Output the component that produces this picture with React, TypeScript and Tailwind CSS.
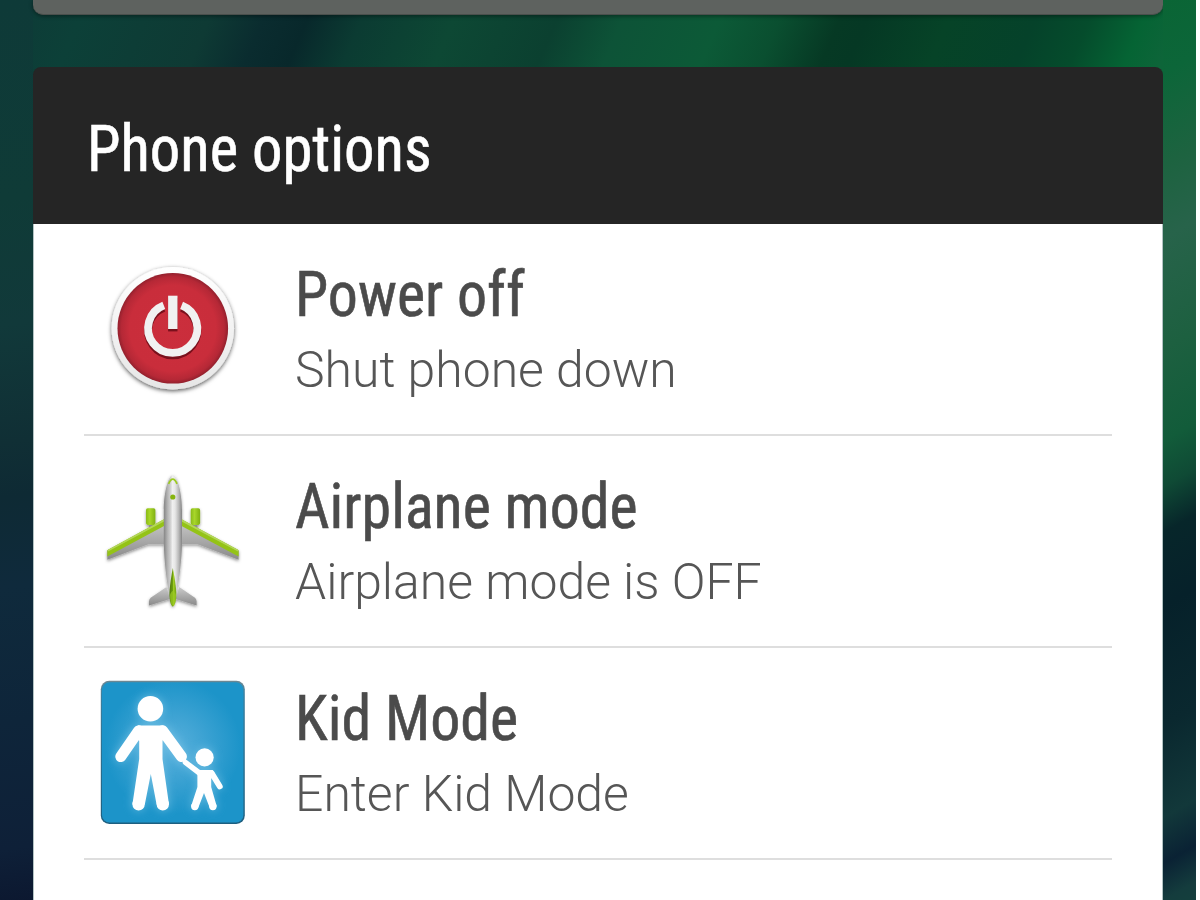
import type { ReactNode } from 'react';

interface Option {
  title: string;
  subtitle: string;
  icon: ReactNode;
}

function PowerIcon() {
  return (
    <svg viewBox="0 0 146 146" className="h-[146px] w-[146px] overflow-visible">
      <defs>
        <linearGradient id="rim" x1="0" y1="0" x2="0" y2="1">
          <stop offset="0" stopColor="#ffffff" />
          <stop offset="1" stopColor="#e6e6e6" />
        </linearGradient>
        <radialGradient id="red" cx="0.5" cy="0.5" r="0.5">
          <stop offset="0" stopColor="#cb2e3c" />
          <stop offset="0.78" stopColor="#c92d3b" />
          <stop offset="0.93" stopColor="#b52836" />
          <stop offset="1" stopColor="#93202d" />
        </radialGradient>
        <filter id="rimShadow" x="-20%" y="-20%" width="140%" height="140%">
          <feDropShadow dx="0" dy="1.6" stdDeviation="2.2" floodColor="#000" floodOpacity="0.65" />
        </filter>
      </defs>
      <circle cx="72.8" cy="71.3" r="61.2" fill="url(#rim)" filter="url(#rimShadow)" />
      <circle cx="72.8" cy="71.3" r="55.3" fill="url(#red)" />
      <g fill="none" stroke="#7a101c" strokeWidth="7.8" transform="translate(0 2.4)">
        <path d="M81.6 48.4A24.6 24.6 0 1 1 63.8 48.4" />
        <path d="M72.8 38.7V72" strokeWidth="9.4" />
      </g>
      <g fill="none" stroke="#f1f1f1" strokeWidth="7.8">
        <path d="M81.6 48.4A24.6 24.6 0 1 1 63.8 48.4" />
        <path d="M72.8 38.7V72" strokeWidth="9.4" />
      </g>
    </svg>
  );
}

function AirplaneIcon() {
  return (
    <svg viewBox="0 0 146 146" className="h-[146px] w-[146px] overflow-visible">
      <defs>
        <linearGradient id="body" x1="0" y1="0" x2="1" y2="0">
          <stop offset="0" stopColor="#858585" />
          <stop offset="0.2" stopColor="#b2b2b2" />
          <stop offset="0.36" stopColor="#cfcfcf" />
          <stop offset="0.48" stopColor="#f0f0f0" />
          <stop offset="0.62" stopColor="#e6e6e6" />
          <stop offset="0.8" stopColor="#bdbdbd" />
          <stop offset="1" stopColor="#858585" />
        </linearGradient>
        <linearGradient id="wing" x1="0" y1="0" x2="0" y2="1">
          <stop offset="0" stopColor="#cbcbcb" />
          <stop offset="1" stopColor="#8a8a8a" />
        </linearGradient>
        <linearGradient id="engine" x1="0" y1="0" x2="1" y2="0">
          <stop offset="0" stopColor="#8aba18" />
          <stop offset="0.4" stopColor="#a8d62a" />
          <stop offset="1" stopColor="#80b012" />
        </linearGradient>
        <linearGradient id="fin" x1="0" y1="0" x2="1" y2="0">
          <stop offset="0" stopColor="#4f780a" />
          <stop offset="0.45" stopColor="#6c9c10" />
          <stop offset="0.55" stopColor="#a2cf24" />
          <stop offset="1" stopColor="#6f9f10" />
        </linearGradient>
        <filter id="planeShadow" x="-20%" y="-20%" width="140%" height="140%">
          <feDropShadow dx="0" dy="1.5" stdDeviation="1.5" floodColor="#000" floodOpacity="0.42" />
        </filter>
      </defs>
      <g filter="url(#planeShadow)">
        <rect x="49" y="54" width="5.5" height="8" fill="#8d8d8d" />
        <rect x="92" y="54" width="5.5" height="8" fill="#8d8d8d" />
        <rect x="46" y="39.3" width="9.4" height="16.6" rx="1.8" fill="url(#engine)" />
        <rect x="90.7" y="39.3" width="9.4" height="16.6" rx="1.8" fill="url(#engine)" />
        <path d="M65 50.3L7.3 81.6V90.7L48.3 75.3H65Z" fill="url(#wing)" />
        <path d="M80.6 50.3L138.6 81.6V90.7L97.6 75.3H80.6Z" fill="url(#wing)" />
        <path d="M64 50.2L8 80.8Q7.3 81.3 7.3 82V87.6L64 57Z" fill="#94c316" />
        <path d="M81.6 50.2L138 80.8Q138.6 81.3 138.6 82V87.6L81.6 57Z" fill="#94c316" />
        <path d="M64 50.2L8 80.8V82.6L64 52.4ZM81.6 50.2L138 80.8V82.6L81.6 52.4Z" fill="#b3d65a" />
        <path d="M66.5 118L51 128.4Q49.2 129.7 49 132V136.4L70 130Z" fill="url(#wing)" />
        <path d="M79.2 118L94.6 128.4Q96.4 129.7 96.6 132V136.4L75.6 130Z" fill="url(#wing)" />
        <path
          d="M72.8 6C68.6 6.5 63.8 22 63.8 42V74C64.2 92 66.4 110 68.6 122C70 131 71.2 137 72.8 137C74.4 137 75.6 131 77 122C79.2 110 81.6 92 82 74V42C82 22 77 6.5 72.8 6Z"
          fill="url(#body)"
        />
      </g>
      <path d="M68.6 14.8Q72.8 5.6 77 14.8" fill="none" stroke="#9bca20" strokeWidth="1.8" />
      <circle cx="72.8" cy="28" r="2.6" fill="#86b40e" />
      <path d="M72.8 99C71.4 106 69.4 119 69.4 126C69.6 132 71.2 137.4 72.8 137.4C74.6 137.4 76.2 132 76.4 126C76.4 119 74.2 106 72.8 99Z" fill="url(#fin)" />
      <path d="M70 126Q72.8 118 76 126Q75.6 136.6 72.8 136.8Q70.4 136.6 70 126Z" fill="#98c822" opacity="0.75" />
    </svg>
  );
}

function KidFigures() {
  return (
    <g fill="currentColor" stroke="currentColor" strokeLinecap="round" strokeLinejoin="round">
      <circle cx="50.4" cy="27.8" r="12.8" stroke="none" />
      <path d="M38.6 49.8L20.8 75.6M62.6 49.8L81.4 75.6" strokeWidth="11" />
      <path d="M38 44.6H63L66 50L62.5 60V78L69 123.6H56.6L50.8 93L44.8 123.6H32.4L39.2 78V60L35 50Z" stroke="none" />
      <path d="M38.6 123.2V123.3M62.8 123.2V123.3" strokeWidth="12.4" />
      <circle cx="104.6" cy="76.4" r="9.1" stroke="none" />
      <path d="M85.4 81.4L99.4 92" strokeWidth="5.4" />
      <path d="M111.6 92L119.8 105.4" strokeWidth="5.8" />
      <path d="M97 89H112.6L114.6 92L111.2 98V106L116.8 125.4L109.6 126.4L104 112L98.4 126.4L91 125.4L97.4 106V94Z" stroke="none" />
      <path d="M94.8 125.4V125.5M112.9 125.4V125.5" strokeWidth="7.4" />
    </g>
  );
}

function KidModeIcon() {
  return (
    <svg viewBox="0 0 146 146" className="h-[146px] w-[146px] overflow-visible">
      <defs>
        <radialGradient id="sky" cx="0.5" cy="0.46" r="0.48">
          <stop offset="0" stopColor="#58b0dc" />
          <stop offset="0.45" stopColor="#3ea3d3" />
          <stop offset="1" stopColor="#1c94c9" />
        </radialGradient>
        <linearGradient id="edge" x1="0" y1="0" x2="0" y2="1">
          <stop offset="0" stopColor="#6d8893" />
          <stop offset="0.1" stopColor="#3b7f9f" />
          <stop offset="1" stopColor="#1d5f80" />
        </linearGradient>
        <filter id="glow" x="-30%" y="-30%" width="160%" height="160%">
          <feGaussianBlur stdDeviation="5" />
        </filter>
      </defs>
      <rect x="0.8" y="-0.3" width="144" height="143.2" rx="8.5" fill="url(#edge)" />
      <rect x="2" y="1.2" width="141.4" height="140.2" rx="7.5" fill="url(#sky)" />
      <g className="text-[#8fd0ee]" opacity="0.6" filter="url(#glow)">
        <KidFigures />
      </g>
      <g className="text-white">
        <KidFigures />
      </g>
    </svg>
  );
}

const options: Option[] = [
  { title: 'Power off', subtitle: 'Shut phone down', icon: <PowerIcon /> },
  { title: 'Airplane mode', subtitle: 'Airplane mode is OFF', icon: <AirplaneIcon /> },
  { title: 'Kid Mode', subtitle: 'Enter Kid Mode', icon: <KidModeIcon /> },
];

export default function App() {
  return (
    <div className="h-[900px] w-[1200px] overflow-hidden bg-white font-['Roboto',sans-serif]">
      <div className="flex h-full w-[1196px]">
        {/* Wallpaper, left edge */}
        <div className="w-[33px] shrink-0 bg-[linear-gradient(172deg,#0e3a38_0%,#0f3b37_22%,#11393a_36%,#102f35_49%,#0e2a34_55%,#0f2a3c_65%,#0e253a_80%,#0e2038_94%,#0c1830_100%)]" />

        <div className="flex min-w-0 flex-1 flex-col bg-[linear-gradient(113deg,#0d3c37_0px,#0c4038_50px,#0e3a34_170px,#0a2c2f_220px,#08282b_260px,#0b3b32_310px,#0d4834_395px,#0b4030_490px,#0d5337_550px,#0c5a37_640px,#0a4f30_695px,#063924_750px,#053824_775px,#064327_850px,#05422a_930px,#054c2c_980px,#056434_1030px,#0d6539_1062px)]">
          {/* Bottom of the dimmed card above */}
          <div className="h-[15px] shrink-0 rounded-b-[10px] border-b border-[#4a4f4c] bg-[#5e625f] shadow-[0_1px_4px_rgba(0,0,0,0.45)]" />

          <div className="mt-[52px] flex flex-1 flex-col">
            <div className="flex h-[157px] shrink-0 items-center rounded-t-lg bg-[#252525] pt-[8px] pl-[54px]">
              <h1 className="origin-left scale-x-[0.947] text-[64px] leading-[80px] whitespace-nowrap text-white font-['Roboto_Condensed'] [-webkit-text-stroke:0.6px_white]">
                Phone options
              </h1>
            </div>

            <ul className="border-x border-[#b3c3c3] bg-white px-[50px]">
              {options.map((option) => (
                <li key={option.title} className="flex h-[212px] border-b-2 border-[#dedede] pt-[33px] pl-4">
                  {option.icon}
                  <div className="pl-[49px] text-[#4b4b4b]">
                    <h2 className="origin-left scale-x-[0.944] text-[63.5px] leading-[76px] whitespace-nowrap font-['Roboto_Condensed'] [-webkit-text-stroke:0.6px_#4b4b4b]">
                      {option.title}
                    </h2>
                    <p className="mt-[7px] text-[49.9px] leading-[60px] font-light whitespace-nowrap text-[#565656]">
                      {option.subtitle}
                    </p>
                  </div>
                </li>
              ))}
            </ul>
            <div className="flex-1 border-x border-[#b3c3c3] bg-white" />
          </div>
        </div>

        {/* Wallpaper, right edge */}
        <div className="w-[33px] shrink-0 bg-[linear-gradient(150deg,#0a6535_0%,#0c6639_8%,#1d6340_18%,#27634a_26%,#1d6040_38%,#125c3a_48%,#0f4a35_53%,#07262a_58%,#06212a_66%,#0a282f_79%,#12383a_89%,#0a2234_94%,#143c3d_98%,#143f3d_100%)]" />
      </div>
    </div>
  );
}
